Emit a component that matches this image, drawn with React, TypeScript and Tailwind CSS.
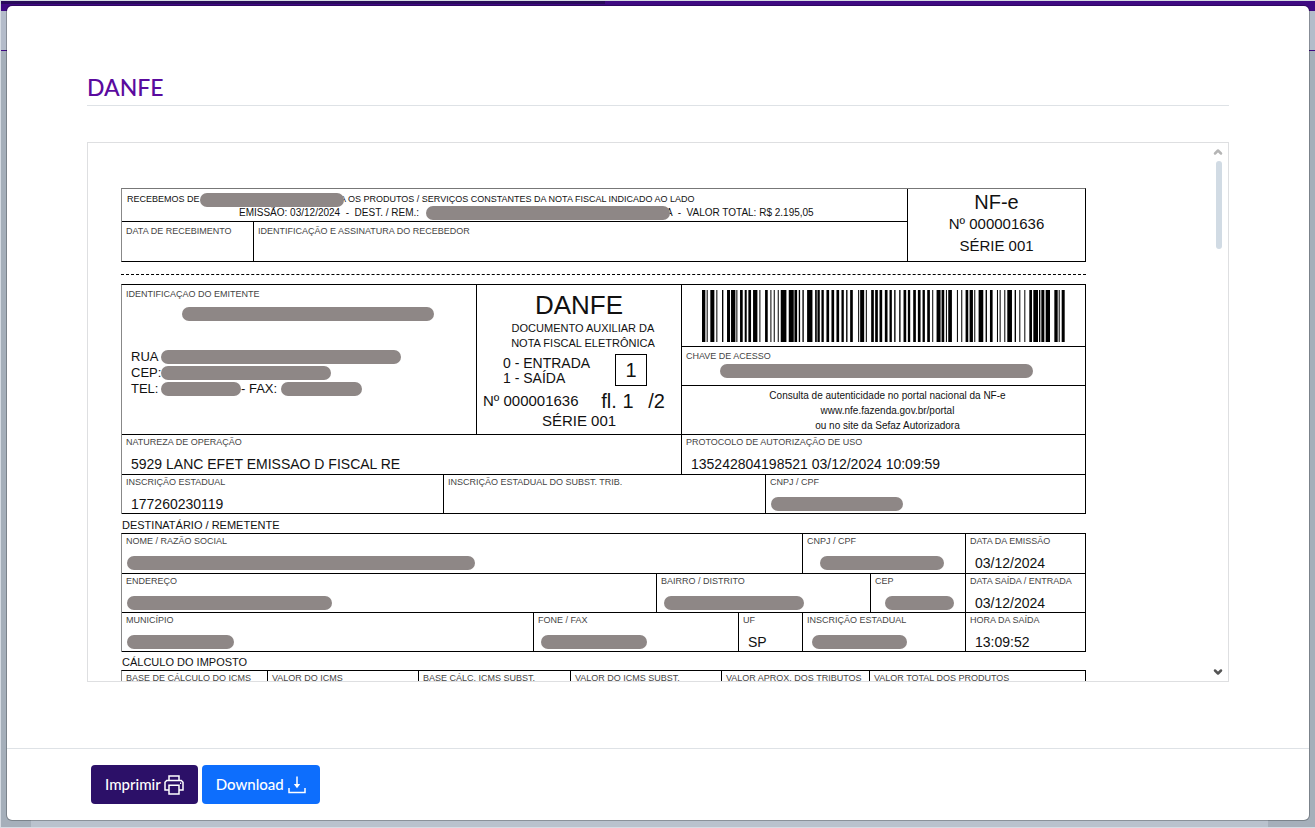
import type { ReactNode } from 'react';
import clsx from 'clsx';
import { ChevronDown, ChevronUp } from 'lucide-react';

// [start, end] of every bar of the access key barcode
const BARS = [
  [94, 104], [108, 111], [119, 131], [137, 140], [154, 158], [169, 178], [181, 194], [197, 200],
  [208, 216], [222, 228], [233, 241], [247, 260], [266, 269], [283, 291], [299, 302], [309, 312],
  [321, 324], [330, 347], [354, 369], [371, 379], [384, 388], [395, 399], [409, 425], [433, 438],
  [440, 447], [452, 459], [467, 475], [482, 490], [497, 505], [512, 519], [526, 530], [538, 546],
  [562, 565], [568, 580], [585, 588], [601, 609], [613, 621], [626, 634], [642, 650], [656, 663],
  [670, 674], [685, 689], [698, 706], [711, 718], [727, 735], [741, 749], [755, 762], [769, 777],
  [784, 787], [797, 809], [812, 820], [825, 828], [832, 843], [858, 861], [871, 874], [884, 892],
  [896, 906], [910, 913], [923, 937], [944, 948], [957, 965], [978, 981], [986, 989], [1000, 1003],
  [1009, 1023], [1031, 1035], [1045, 1048], [1060, 1063], [1075, 1083], [1087, 1101], [1104, 1108],
  [1111, 1120], [1124, 1137], [1150, 1160], [1163, 1166], [1172, 1181],
];

function Barcode() {
  return (
    <svg
      viewBox="94 0 1087 153"
      preserveAspectRatio="none"
      className="mt-[5px] ml-5 block h-[52px] w-[90%]"
      role="img"
      aria-label="Código de barras"
    >
      {BARS.map(([start, end]) => (
        <rect key={start} x={start} y="0" width={end - start} height="153" />
      ))}
    </svg>
  );
}

function PrinterIcon() {
  return (
    <svg viewBox="0 0 20 20" className="h-5 w-5" fill="none" stroke="currentColor" strokeWidth="1.5">
      <path d="M5 5.5V1h10v4.5" />
      <path d="M5 15H1V7.2l1.7-1.7h14.6L19 7.2V15h-4" />
      <path d="M5 10.2h10V19H5z" />
      <path d="M16 8.2h1.2" />
    </svg>
  );
}

function DownloadIcon() {
  return (
    <svg viewBox="0 0 18 18" className="h-[18px] w-[18px]" fill="none" stroke="currentColor" strokeWidth="1.5">
      <path d="M9 .5v10" />
      <path d="M5.8 8h6.4L9 12.2z" fill="currentColor" stroke="none" />
      <path d="M1 12v4.500h16V12" />
    </svg>
  );
}

function Redacted({ className }: { className: string }) {
  return <span className={clsx('block h-[14px] shrink-0 rounded-full bg-[#8e8786]', className)} />;
}

function Label({ children }: { children: ReactNode }) {
  return <span className="block pl-1 text-[9px] leading-3 text-[#444]">{children}</span>;
}

interface CellProps {
  label: string;
  value?: string;
  children?: ReactNode;
}

function Cell({ label, value, children }: CellProps) {
  return (
    <div className="min-w-0 border-l border-black pt-px first:border-l-0">
      <Label>{label}</Label>
      <div className="mt-[7px] flex h-[18px] items-center">
        {value ? <span className="pl-[9px] text-[14px]">{value}</span> : children}
      </div>
    </div>
  );
}

function Row({ className, children }: { className: string; children: ReactNode }) {
  return <div className={clsx('grid border-b border-black', className)}>{children}</div>;
}

function Box({ children }: { children: ReactNode }) {
  return <div className="border-t border-r border-l border-t-black border-r-black border-l-[#888]">{children}</div>;
}

function Receipt() {
  return (
    <div className="grid grid-cols-[785fr_178fr] border border-t-[#777] border-r-black border-b-black border-l-[#888]">
      <div>
        <div className="h-[33px] border-b border-black pt-1 whitespace-pre">
          <div className="flex h-[13px] items-center pl-[5px] text-[9px]">
            <span className="w-[73px]">RECEBEMOS DE</span>
            <Redacted className="z-10 w-[144px]" />
            <span className="-ml-1">A OS PRODUTOS / SERVIÇOS CONSTANTES DA NOTA FISCAL INDICADO AO LADO</span>
          </div>
          <div className="flex h-[13px] items-center pl-[117px] text-[10px]">
            <span className="w-[187px]">EMISSÃO: 03/12/2024  -  DEST. / REM.:</span>
            <Redacted className="z-10 w-[244px]" />
            <span className="-ml-1">A  -  VALOR TOTAL: R$ 2.195,05</span>
          </div>
        </div>
        <div className="grid h-[39px] grid-cols-[131fr_654fr]">
          <div className="pt-[3px]">
            <Label>DATA DE RECEBIMENTO</Label>
          </div>
          <div className="border-l border-black pt-[3px]">
            <Label>IDENTIFICAÇÃO E ASSINATURA DO RECEBEDOR</Label>
          </div>
        </div>
      </div>
      <div className="border-l border-black pt-[2px] text-center text-[15px] leading-[22px]">
        <p className="text-[20px]">NF-e</p>
        <p>Nº 000001636</p>
        <p>SÉRIE 001</p>
      </div>
    </div>
  );
}

function Issuer() {
  return (
    <div className="pt-[3px] text-[13px]">
      <Label>IDENTIFICAÇAO DO EMITENTE</Label>
      <Redacted className="mt-[7px] ml-[60px] w-[252px]" />
      <div className="mt-7 grid grid-cols-[30px_1fr] items-center pl-[9px] leading-4">
        <span>RUA</span>
        <Redacted className="w-[240px]" />
        <span>CEP:</span>
        <Redacted className="w-[170px]" />
        <span>TEL:</span>
        <div className="flex items-center">
          <Redacted className="w-[80px]" />
          <span className="w-10">- FAX:</span>
          <Redacted className="w-[81px]" />
        </div>
      </div>
    </div>
  );
}

function DanfeInfo() {
  return (
    <div className="border-l border-black pt-1 text-[15px]">
      <p className="text-center text-[26px] leading-8">DANFE</p>
      <p className="pl-2 text-center text-[11px] leading-[15px]">
        DOCUMENTO AUXILIAR DA
        <br />
        NOTA FISCAL ELETRÔNICA
      </p>
      <div className="mt-[3px] flex justify-between pr-[34px] pl-[26px]">
        <p className="pt-[2px] text-[14px] leading-[15px]">
          0 - ENTRADA
          <br />1 - SAÍDA
        </p>
        <span className="flex h-8 w-8 items-center justify-center border border-black text-[20px]">1</span>
      </div>
      <div className="mt-1 flex items-center justify-between pr-4 pl-[6px] leading-[22px]">
        <span>Nº 000001636</span>
        <span className="pl-2 text-[20px]">fl. 1</span>
        <span className="text-[20px]">/2</span>
      </div>
      <p className="text-center leading-[18px]">SÉRIE 001</p>
    </div>
  );
}

function AccessKey() {
  return (
    <div className="border-l border-black">
      <Barcode />
      <div className="mt-1 h-10 border-y border-black pt-[3px]">
        <Label>CHAVE DE ACESSO</Label>
        <Redacted className="mt-[2px] ml-[38px] w-[313px]" />
      </div>
      <p className="pt-[2px] pl-2 text-center text-[10px] leading-[15px]">
        Consulta de autenticidade no portal nacional da NF-e
        <br />
        www.nfe.fazenda.gov.br/portal
        <br />
        ou no site da Sefaz Autorizadora
      </p>
    </div>
  );
}

function DanfeDocument() {
  return (
    <article
      className="flex-1 pt-[45px] pl-[33px] text-[#111]"
      style={{ fontFamily: '"Liberation Sans", Arial, sans-serif' }}
    >
      <Receipt />
      <div className="mt-3 mb-[9px] border-t border-dashed border-black" />

      <Box>
        <Row className="h-[150px] grid-cols-[354fr_205fr_404fr]">
          <Issuer />
          <DanfeInfo />
          <AccessKey />
        </Row>
        <Row className="h-10 grid-cols-[559fr_404fr]">
          <Cell label="NATUREZA DE OPERAÇÃO" value="5929 LANC EFET EMISSAO D FISCAL RE" />
          <Cell label="PROTOCOLO DE AUTORIZAÇÃO DE USO" value="135242804198521 03/12/2024 10:09:59" />
        </Row>
        <Row className="h-[39px] grid-cols-[321fr_322fr_320fr]">
          <Cell label="INSCRIÇÃO ESTADUAL" value="177260230119" />
          <Cell label="INSCRIÇÃO ESTADUAL DO SUBST. TRIB." />
          <Cell label="CNPJ / CPF">
            <Redacted className="ml-[5px] w-[132px]" />
          </Cell>
        </Row>
      </Box>

      <h2 className="h-[19px] pt-[2px] pl-px text-[11px] leading-[18px]">DESTINATÁRIO / REMETENTE</h2>
      <Box>
        <Row className="h-10 grid-cols-[680fr_163fr_120fr]">
          <Cell label="NOME / RAZÃO SOCIAL">
            <Redacted className="ml-[5px] w-[348px]" />
          </Cell>
          <Cell label="CNPJ / CPF">
            <Redacted className="ml-[17px] w-[124px]" />
          </Cell>
          <Cell label="DATA DA EMISSÃO" value="03/12/2024" />
        </Row>
        <Row className="h-[39px] grid-cols-[534fr_214fr_95fr_120fr]">
          <Cell label="ENDEREÇO">
            <Redacted className="ml-[5px] w-[205px]" />
          </Cell>
          <Cell label="BAIRRO / DISTRITO">
            <Redacted className="ml-[7px] w-[140px]" />
          </Cell>
          <Cell label="CEP">
            <Redacted className="ml-[14px] w-[69px]" />
          </Cell>
          <Cell label="DATA SAÍDA / ENTRADA" value="03/12/2024" />
        </Row>
        <Row className="h-[39px] grid-cols-[411fr_205fr_64fr_163fr_120fr]">
          <Cell label="MUNICÍPIO">
            <Redacted className="ml-[5px] w-[107px]" />
          </Cell>
          <Cell label="FONE / FAX">
            <Redacted className="ml-[7px] w-[106px]" />
          </Cell>
          <Cell label="UF" value="SP" />
          <Cell label="INSCRIÇÃO ESTADUAL">
            <Redacted className="ml-[9px] w-[95px]" />
          </Cell>
          <Cell label="HORA DA SAÍDA" value="13:09:52" />
        </Row>
      </Box>

      <h2 className="h-[18px] pt-px pl-px text-[11px] leading-[18px]">CÁLCULO DO IMPOSTO</h2>
      <Box>
        <Row className="h-10 grid-cols-[145fr_151fr_152fr_151fr_148fr_216fr]">
          <Cell label="BASE DE CÁLCULO DO ICMS" />
          <Cell label="VALOR DO ICMS" />
          <Cell label="BASE CÁLC. ICMS SUBST." />
          <Cell label="VALOR DO ICMS SUBST." />
          <Cell label="VALOR APROX. DOS TRIBUTOS" />
          <Cell label="VALOR TOTAL DOS PRODUTOS" />
        </Row>
      </Box>
    </article>
  );
}

function Backdrop() {
  return (
    <div className="flex h-full flex-col bg-[#a5afba]">
      <div className="h-[10px] bg-[#3f0a82]">
        <div className="h-[3px] w-[46%] bg-[#290b5b]" />
      </div>
      <div className="h-10 border-b border-[#3f0a82] bg-[#b4bcca]" />
      <div className="mt-auto mr-[47px] ml-[30px] h-[7px] bg-[#b9c2cd]" />
    </div>
  );
}

export default function App() {
  return (
    <div
      className="relative h-screen overflow-hidden bg-[#d5dbe3] pt-px pb-px pl-px"
      style={{ fontFamily: 'Lato, sans-serif' }}
    >
      <Backdrop />

      <div
        role="dialog"
        aria-labelledby="danfe-title"
        className="absolute inset-x-[5px] top-[5px] bottom-[7px] ml-px flex flex-col rounded-md border border-black/25 bg-white bg-clip-padding"
      >
        <div className="flex min-h-0 flex-1 flex-col px-20 pt-[66px] pb-[66px]">
          <h1
            id="danfe-title"
            className="border-b border-[#dee2e6] pb-[3px] text-[23px] leading-[30px] font-medium text-[#5a0a9e]"
          >
            DANFE
          </h1>

          <div className="mt-9 flex min-h-0 flex-1 overflow-hidden border border-[#dedfe1]">
            <DanfeDocument />
            <div className="flex w-[142px] flex-col items-end pt-[3px] pr-1 pb-[3px]">
              <ChevronUp className="h-3 w-3 text-[#b5b5b5]" strokeWidth={5} />
              <div className="mt-[3px] mr-[2px] h-[88px] w-[6px] rounded-full bg-[#d1dbe4]" />
              <ChevronDown className="mt-auto h-3 w-3 text-[#555]" strokeWidth={5} />
            </div>
          </div>
        </div>

        <div className="flex gap-1 border-t border-[#dee2e6] py-4 pl-[84px] text-[15px] font-medium text-white">
          <button className="flex h-[39px] items-center gap-[3px] rounded bg-[#2c1068] px-[14px]">
            Imprimir
            <PrinterIcon />
          </button>
          <button className="flex h-[39px] items-center gap-1 rounded bg-[#0d6efd] px-[14px]">
            Download
            <DownloadIcon />
          </button>
        </div>
      </div>
    </div>
  );
}
